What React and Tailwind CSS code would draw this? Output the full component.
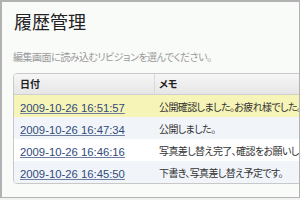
import React from 'react';

const rows = [
  { date: '2009-10-26 16:51:57', memo: '公開確認しました。お疲れ様でした。', bg: 'bg-[#f6f4b6]' },
  { date: '2009-10-26 16:47:34', memo: '公開しました。', bg: 'bg-[#f1f5fa]' },
  { date: '2009-10-26 16:46:16', memo: '写真差し替え完了、確認をお願いします。', bg: 'bg-white' },
  { date: '2009-10-26 16:45:50', memo: '下書き、写真差し替え予定です。', bg: 'bg-[#f1f5fa]' },
];

const jp = "font-['Liberation_Sans','Noto_Sans_CJK_JP',sans-serif] [font-feature-settings:'palt']";

const App = () => {
  return (
    <div className="w-[300px] h-[200px] bg-[#f2f2f2] overflow-hidden">
      <div className={`w-[300px] h-[198px] border-t-2 border-l-2 border-r border-b border-[#b2b2b2] bg-[#f9fbf9] overflow-hidden ${jp}`}>
        <h1 className="ml-[12px] mt-[10px] text-[18px] leading-[22px] text-[#222]">履歴管理</h1>
        <p className="ml-[11px] mt-[18px] text-[10px] leading-[12px] text-[#999] tracking-[-0.5px] whitespace-nowrap">編集画面に読み込むリビジョンを選んでください。</p>
        <div className="ml-[11px] mt-[9px] w-[320px] border border-[#c8c8c8] rounded-[4px] overflow-hidden">
          <div className="flex h-[21px] bg-gradient-to-b from-[#f6f6f6] to-[#e6e6e6] border-b border-[#cfcfcf] text-[10px] font-bold text-[#222]">
            <div className="w-[141px] shrink-0 pl-[6px] flex items-center border-r border-[#d8d8d8]">日付</div>
            <div className="pl-[4px] flex items-center">メモ</div>
          </div>
          {rows.map((r) => (
            <div key={r.date} className={`flex h-[22px] items-center ${r.bg}`}>
              <div className="w-[141px] shrink-0 pl-[6px] pt-[2px]">
                <a href="#" className="font-['Liberation_Sans',sans-serif] text-[11.3px] text-[#2f4a7c] underline decoration-[#6c7fa3]">{r.date}</a>
              </div>
              <div className="pl-[4px] pt-[2px] text-[10px] text-[#333] tracking-[-0.6px] whitespace-nowrap">{r.memo}</div>
            </div>
          ))}
        </div>
      </div>
    </div>
  );
};

export default App;
